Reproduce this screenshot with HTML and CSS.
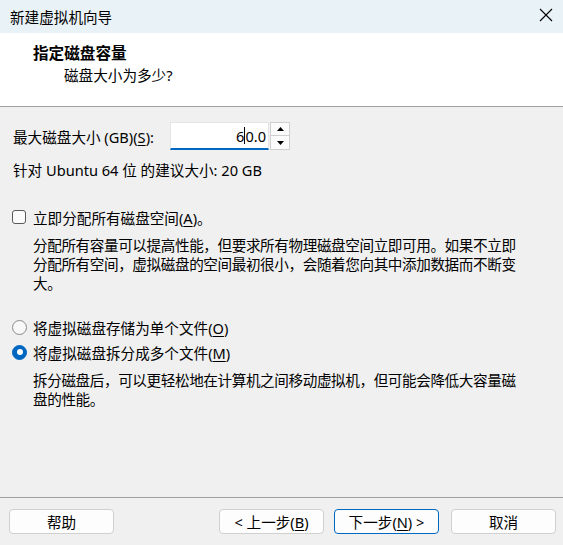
FILE: index.html
```html
<!DOCTYPE html>
<html lang="zh-CN">
<head>
<meta charset="utf-8">
<title>新建虚拟机向导</title>
<link rel="stylesheet" href="styles.css">
</head>
<body>
<div class="window">
  <div class="titlebar">
    <span class="title">新建虚拟机向导</span>
    <svg class="close" width="14" height="14" viewBox="0 0 14 14"><path d="M1 1 L13 13 M13 1 L1 13" stroke="#000" stroke-width="1.1" fill="none"/></svg>
  </div>
  <div class="header">
    <div class="h1">指定磁盘容量</div>
    <div class="sub">磁盘大小为多少?</div>
  </div>
  <div class="content">
    <div class="size-row">
      <span class="size-label">最大磁盘大小 (GB)(<u>S</u>):</span>
      <div class="spin">
        <div class="spin-input"><span>6</span><span class="caret"></span><span>0.0</span></div>
        <div class="spin-btns">
          <div class="spin-btn"><svg width="7" height="4" viewBox="0 0 7 4"><path d="M0 4 L3.5 0 L7 4Z" fill="#000"/></svg></div>
          <div class="spin-btn"><svg width="7" height="4" viewBox="0 0 7 4"><path d="M0 0 L3.5 4 L7 0Z" fill="#000"/></svg></div>
        </div>
      </div>
    </div>
    <div class="recommend">针对 Ubuntu 64 位 的建议大小: 20 GB</div>
    <div class="option check-row">
      <span class="checkbox"></span>
      <span>立即分配所有磁盘空间(<u>A</u>)。</span>
    </div>
    <p class="desc">分配所有容量可以提高性能，但要求所有物理磁盘空间立即可用。如果不立即分配所有空间，虚拟磁盘的空间最初很小，会随着您向其中添加数据而不断变大。</p>
    <div class="option radio-row1">
      <span class="radio"></span>
      <span>将虚拟磁盘存储为单个文件(<u>O</u>)</span>
    </div>
    <div class="option radio-row2">
      <span class="radio checked"></span>
      <span>将虚拟磁盘拆分成多个文件(<u>M</u>)</span>
    </div>
    <p class="desc desc2">拆分磁盘后，可以更轻松地在计算机之间移动虚拟机，但可能会降低大容量磁盘的性能。</p>
  </div>
  <div class="footer">
    <button class="btn">帮助</button>
    <span class="spacer"></span>
    <button class="btn">&lt; 上一步(<u>B</u>)</button>
    <button class="btn primary">下一步(<u>N</u>) &gt;</button>
    <button class="btn cancel">取消</button>
  </div>
</div>
</body>
</html>
```
FILE: styles.css
```css
* { box-sizing: border-box; }
html, body { margin: 0; padding: 0; }
body {
  width: 563px;
  height: 545px;
  background: #f0f0f0;
  font-family: "Noto Sans", "Noto Sans CJK SC", sans-serif;
  font-size: 14.6px;
  color: #000;
  overflow: hidden;
}
.window { display: flex; flex-direction: column; height: 545px; }
.titlebar {
  height: 33px;
  background: #e9f3f7;
  display: flex;
  align-items: center;
  justify-content: space-between;
  padding: 0 10px 0 10px;
}
.title { font-family: "Noto Sans CJK SC", sans-serif; font-size: 14.6px; line-height: 20px; }
.close { display: block; margin-top: -4px; }
.header {
  height: 74px;
  background: #fff;
  border-bottom: 1px solid #a0a0a0;
  padding-top: 9px;
}
.h1 { padding-left: 33px; font-weight: bold; font-size: 15.6px; line-height: 20px; font-family: "Noto Sans CJK SC", sans-serif; }
.sub { padding-left: 64px; margin-top: 3px; line-height: 20px; }
.content { height: 391px; border-bottom: 1px solid #a0a0a0; padding-top: 15px; }
.size-row { display: flex; align-items: center; height: 28px; }
.size-label { width: 170px; padding-left: 13px; }
.spin { display: flex; height: 28px; }
.spin-input {
  width: 99px;
  height: 28px;
  background: #fff;
  border: 1px solid #e5e5e5;
  border-bottom: 2px solid #0067c0;
  display: flex;
  align-items: center;
  justify-content: flex-end;
  padding-right: 2px;
  line-height: 20px;
}
.caret { width: 1px; height: 17px; background: #000; }
.spin-btns { width: 20px; display: flex; flex-direction: column; margin-left: 1px; }
.spin-btn {
  height: 14px;
  border: 1px solid #cfcfcf;
  background: #fbfbfb;
  display: flex;
  align-items: center;
  justify-content: center;
}
.spin-btn + .spin-btn { border-top: none; }
.recommend { margin-top: 10px; padding-left: 13px; line-height: 20px; }
.option { display: flex; align-items: center; height: 20px; }
.option > span:last-child { margin-left: 7px; }
.check-row { margin-top: 27px; padding-left: 12px; }
.checkbox {
  width: 14px; height: 14px;
  border: 1px solid #5a5a5a;
  border-radius: 3px;
  background: #fbfbfb;
}
.desc {
  margin: 8px 0 0 33px;
  width: 492px;
  line-height: 19px;
  font-family: "Noto Sans CJK SC", sans-serif;
  font-size: 14.6px;
  letter-spacing: -0.4px;
}
.radio-row1 { margin-top: 25px; padding-left: 12px; }
.radio-row2 { margin-top: 5px; padding-left: 12px; }
.radio {
  width: 15px; height: 15px;
  border-radius: 50%;
  border: 1px solid #8a8a8a;
  background: #f8f8f8;
  position: relative;
}
.option .radio + span { margin-left: 6px; }
.radio.checked { background: #0067c0; border-color: #0067c0; }
.radio.checked::after {
  content: "";
  position: absolute;
  left: 3.5px; top: 3.5px;
  width: 6px; height: 6px;
  border-radius: 50%;
  background: #fff;
}
.desc2 { margin-top: 8px; }
u { text-decoration-thickness: 1px; text-underline-offset: 2px; }
.footer { display: flex; align-items: flex-start; padding: 11px 7px 0 9px; }
.spacer { flex: 1; }
.btn {
  width: 105px;
  height: 25px;
  border: 1px solid #d0d0d0;
  border-radius: 4px;
  background: #fdfdfd;
  font-family: "Noto Sans", "Noto Sans CJK SC", sans-serif;
  font-size: 14.6px;
  color: #000;
  padding: 0;
  line-height: 20px;
}
.btn.primary { border-color: #0067c0; margin-left: 10px; }
.btn.cancel { margin-left: 12px; }
```
